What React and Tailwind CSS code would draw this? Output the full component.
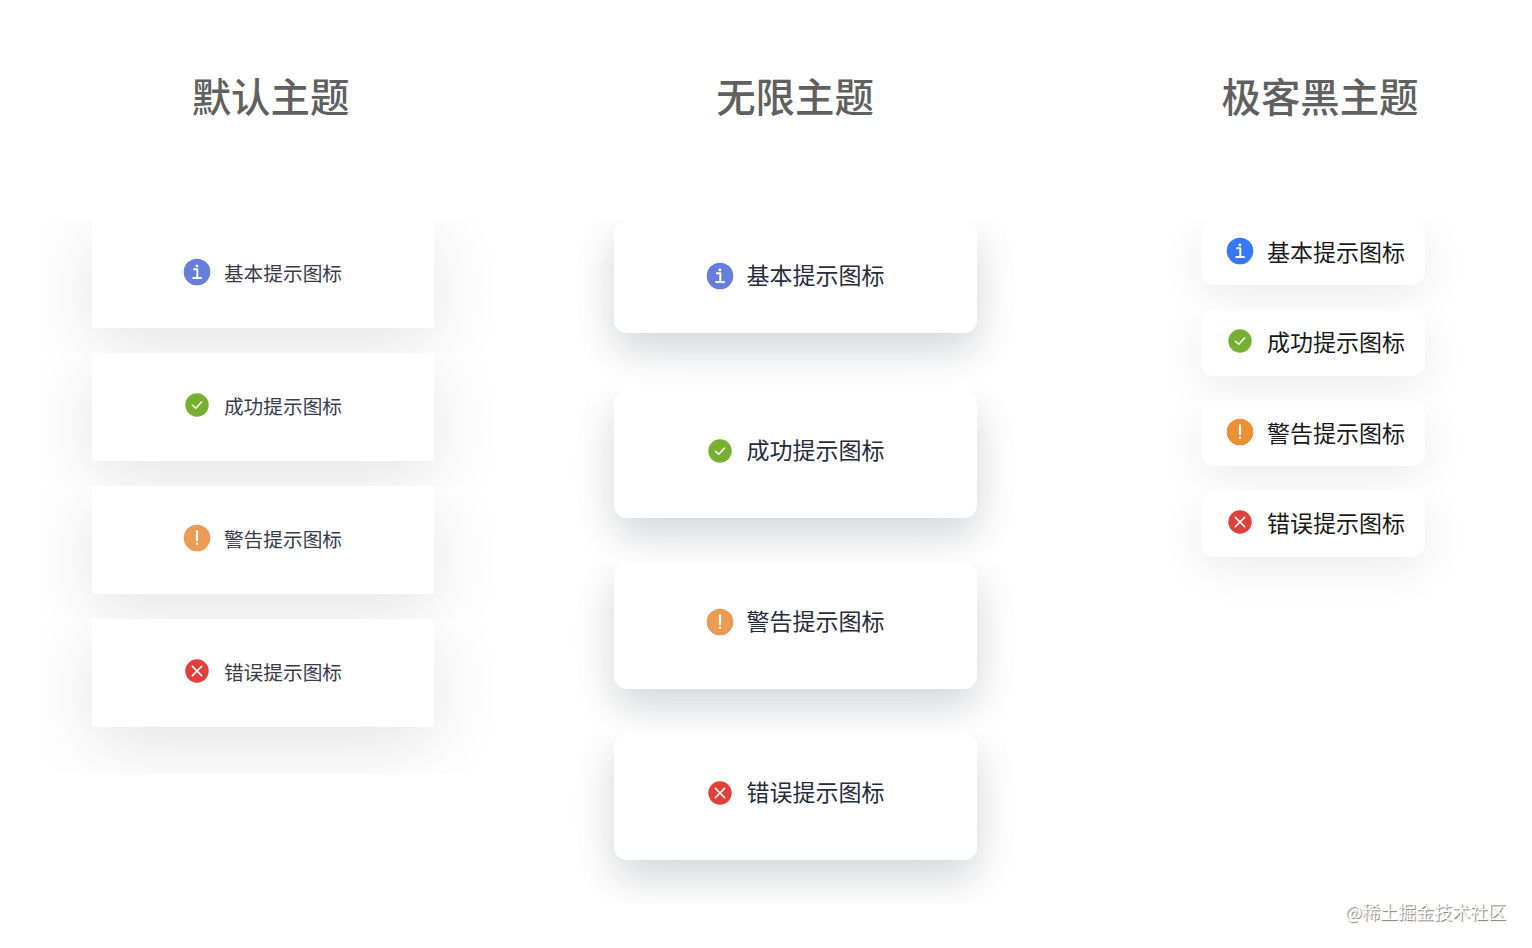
import React from 'react';
import clsx from 'clsx';

const messages = [
  { type: 'info', text: '基本提示图标' },
  { type: 'success', text: '成功提示图标' },
  { type: 'warning', text: '警告提示图标' },
  { type: 'error', text: '错误提示图标' },
];

const StatusIcon = ({ type, vivid }) => {
  if (type === 'info') {
    return (
      <svg className="-ml-px size-7 shrink-0" viewBox="0 0 28 28" fill="none">
        <circle cx="14" cy="14" r="13.3" fill={vivid ? '#3778f7' : '#667dd9'} />
        <circle cx="13.9" cy="7.9" r="1.4" fill="#fff" />
        <path d="M11 11.3H14.3V19.9M10.2 20.1H18" stroke="#fff" strokeWidth="2" strokeLinecap="round" strokeLinejoin="round" />
      </svg>
    );
  }

  if (type === 'success') {
    return (
      <svg className="-ml-px size-7 shrink-0" viewBox="0 0 28 28" fill="none">
        <circle cx="14" cy="14" r="11.7" fill="#77af33" />
        <path d="M9.4 14.2L12.7 17.3L18.6 11" stroke="#fff" strokeWidth="1.5" strokeLinecap="round" strokeLinejoin="round" />
      </svg>
    );
  }

  if (type === 'warning') {
    return (
      <svg className="-ml-px size-7 shrink-0" viewBox="0 0 28 28" fill="none">
        <circle cx="14" cy="14" r="13.3" fill={vivid ? '#ed8f33' : '#ea9c54'} />
        <path d="M14 7.3V16.2" stroke="#fff" strokeWidth="2.2" strokeLinecap="round" />
        <circle cx="14" cy="19.8" r="1.2" fill="#fff" />
      </svg>
    );
  }

  return (
    <svg className="-ml-px size-7 shrink-0" viewBox="0 0 28 28" fill="none">
      <circle cx="14" cy="14" r="11.7" fill="#dd4139" />
      <path d="M9.4 9.4L18.6 18.6M18.6 9.4L9.4 18.6" stroke="#fff" strokeWidth="1.5" strokeLinecap="round" />
    </svg>
  );
};

const Message = ({ type, text, vivid, textClass }) => (
  <div className="flex h-7 items-center gap-[13px]">
    <StatusIcon type={type} vivid={vivid} />
    <span className={clsx('whitespace-nowrap leading-7', textClass)}>{text}</span>
  </div>
);

const Title = ({ children, className }) => (
  <h2 className={clsx('h-[63px] text-center text-[39.4px] leading-[60px] font-medium text-[#606060]', className)}>
    {children}
  </h2>
);

const App = () => {
  return (
    <div className="relative flex h-[948px] w-[1532px] overflow-hidden bg-white pt-[65px] font-['Noto_Sans_CJK_SC',sans-serif]">
      {/* Default theme */}
      <section className="w-[526px]">
        <Title className="pl-[15px]">默认主题</Title>
        <div className="mt-[92px] ml-[46px] w-[448px]">
          {messages.map((item, i) => (
            <div key={item.type} className={clsx('overflow-hidden px-[46px]', i === 3 ? 'h-[155px]' : 'h-[133px]')}>
              <div className="flex h-[108px] w-[342px] justify-center rounded-[3px] bg-white pt-[38px] shadow-[0_18px_72px_rgba(0,0,0,0.11)]">
                <Message {...item} textClass="pt-px text-[19.7px] text-[#383c4c]" />
              </div>
            </div>
          ))}
        </div>
      </section>

      {/* Infinity theme */}
      <section className="w-[538px]">
        <Title>无限主题</Title>
        <div className="mt-[92px] ml-[36px] w-[468px]">
          {messages.map((item, i) => (
            <div key={item.type} className="h-[171px] overflow-hidden px-[52px]">
              <div
                className={clsx(
                  'flex w-[363px] justify-center rounded-[13px] bg-white shadow-[0_12px_64px_rgba(0,0,0,0.04),0_18px_38px_rgba(8,20,34,0.145)]',
                  i === 0 ? 'h-[113px] pt-[42px]' : 'h-[127px] pt-[46px]'
                )}
              >
                <Message {...item} textClass="pb-1 text-[23px] text-[#262c3b]" />
              </div>
            </div>
          ))}
        </div>
      </section>

      {/* Geek black theme */}
      <section className="w-[468px]">
        <Title className="pl-[44px]">极客黑主题</Title>
        <div className="mt-[92px] ml-[97px] w-[304px]">
          {messages.map((item, i) => (
            <div
              key={item.type}
              className={clsx('overflow-hidden px-[40px]', i === 3 ? 'h-[130px]' : i === 1 ? 'h-[91px]' : 'h-[90px]')}
            >
              <div
                className={clsx(
                  'flex w-[224px] rounded-[13px] bg-white pt-[17px] pl-[26px] shadow-[0_12px_44px_rgba(0,0,0,0.08)]',
                  i % 2 === 0 ? 'h-[65px]' : 'h-[66px]'
                )}
              >
                <Message {...item} vivid textClass="pb-px text-[23px] text-[#191919]" />
              </div>
            </div>
          ))}
        </div>
      </section>

      <span className="absolute right-[26px] bottom-[23px] text-[18px] leading-7 text-white [text-shadow:1px_1px_1px_#777]">
        @稀土掘金技术社区
      </span>
    </div>
  );
};

export default App;
